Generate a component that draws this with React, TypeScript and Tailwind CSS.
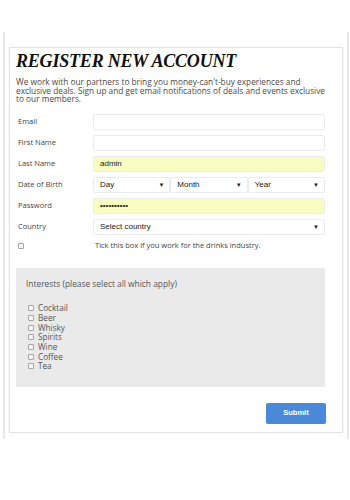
import React from "react";

const sans = { fontFamily: '"Open Sans", "Liberation Sans", sans-serif' };

const interests = ["Cocktail", "Beer", "Whisky", "Spirits", "Wine", "Coffee", "Tea"];

function Arrow() {
  return <span className="text-[6px] leading-none text-[#222]">▼</span>;
}

function Row({ label, children }: { label: string; children: React.ReactNode }) {
  return (
    <div className="flex h-[16px] items-center">
      <div className="w-[77px] pl-[2px] text-[7.5px] text-[#444]">{label}</div>
      <div className="flex h-full flex-1">{children}</div>
    </div>
  );
}

function Field({ value = "", filled = false }: { value?: string; filled?: boolean }) {
  return (
    <div
      className={`flex h-full flex-1 items-center rounded-[2px] border border-[#ececec] px-[6px] font-['Liberation_Sans',Arial,sans-serif] text-[8px] text-[#222] ${
        filled ? "bg-[#fafdc2]" : "bg-white"
      }`}
    >
      {value}
    </div>
  );
}

function Select({ value }: { value: string }) {
  return (
    <div className="flex h-full flex-1 items-center justify-between rounded-[2px] border border-[#ececec] bg-white pl-[6px] pr-[5px] font-['Liberation_Sans',Arial,sans-serif] text-[8px] text-[#222]">
      <span>{value}</span>
      <Arrow />
    </div>
  );
}

function Box() {
  return <span className="block h-[6px] w-[6px] shrink-0 rounded-[1px] border border-[#a5a5a5] bg-[#f5f5f5]" />;
}

export default function App() {
  return (
    <div className="h-[500px] w-[350px] overflow-hidden bg-white" style={sans}>
      <div className="ml-[3px] mt-[32px] h-[407px] w-[346px] border-x-2 border-[#e8e8e8] px-[4px] pt-[15px]">
        <div className="h-[386px] border border-[#e2e2e2] pl-[6px] pr-[17px] pt-[3px] shadow-[0_0_1px_rgba(0,0,0,0.08)]">
          {/* Header */}
          <h1 className="font-['Liberation_Serif',serif] text-[18px] font-bold italic leading-[20px] tracking-[-0.2px] text-[#111]">
            REGISTER NEW ACCOUNT
          </h1>
          <p className="mt-[7px] text-[8.3px] leading-[8.5px] text-[#4a4a4a]">
            We work with our partners to bring you money-can't-buy experiences and exclusive deals. Sign up and get
            email notifications of deals and events exclusive to our members.
          </p>

          {/* Form */}
          <div className="mt-[10px] flex flex-col gap-[5px]">
            <Row label="Email">
              <Field />
            </Row>
            <Row label="First Name">
              <Field />
            </Row>
            <Row label="Last Name">
              <Field value="admin" filled />
            </Row>
            <Row label="Date of Birth">
              <Select value="Day" />
              <Select value="Month" />
              <Select value="Year" />
            </Row>
            <Row label="Password">
              <Field value="••••••••••" filled />
            </Row>
            <Row label="Country">
              <Select value="Select country" />
            </Row>
            <div className="flex h-[12px] items-center">
              <div className="flex w-[79px] items-center pl-[2px]">
                <Box />
              </div>
              <span className="text-[7.5px] text-[#444]">Tick this box if you work for the drinks industry.</span>
            </div>
          </div>

          {/* Interests */}
          <div className="mt-[16px] h-[119px] bg-[#ebeaea] pl-[10px] pt-[10px]">
            <p className="text-[8.4px] leading-[12px] text-[#555]">Interests (please select all which apply)</p>
            <ul className="mt-[14px]">
              {interests.map((i) => (
                <li key={i} className="flex h-[9.7px] items-center gap-[4px] pl-[2px] text-[8.2px] text-[#555]">
                  <Box />
                  {i}
                </li>
              ))}
            </ul>
          </div>

          <div className="mt-[16px] flex justify-end">
            <button
              type="button"
              className="-mr-[1px] h-[21px] w-[60px] rounded-[2px] bg-[#4a89d7] font-['Liberation_Sans',Arial,sans-serif] text-[7.5px] font-bold text-white"
            >
              Submit
            </button>
          </div>
        </div>
      </div>
    </div>
  );
}
